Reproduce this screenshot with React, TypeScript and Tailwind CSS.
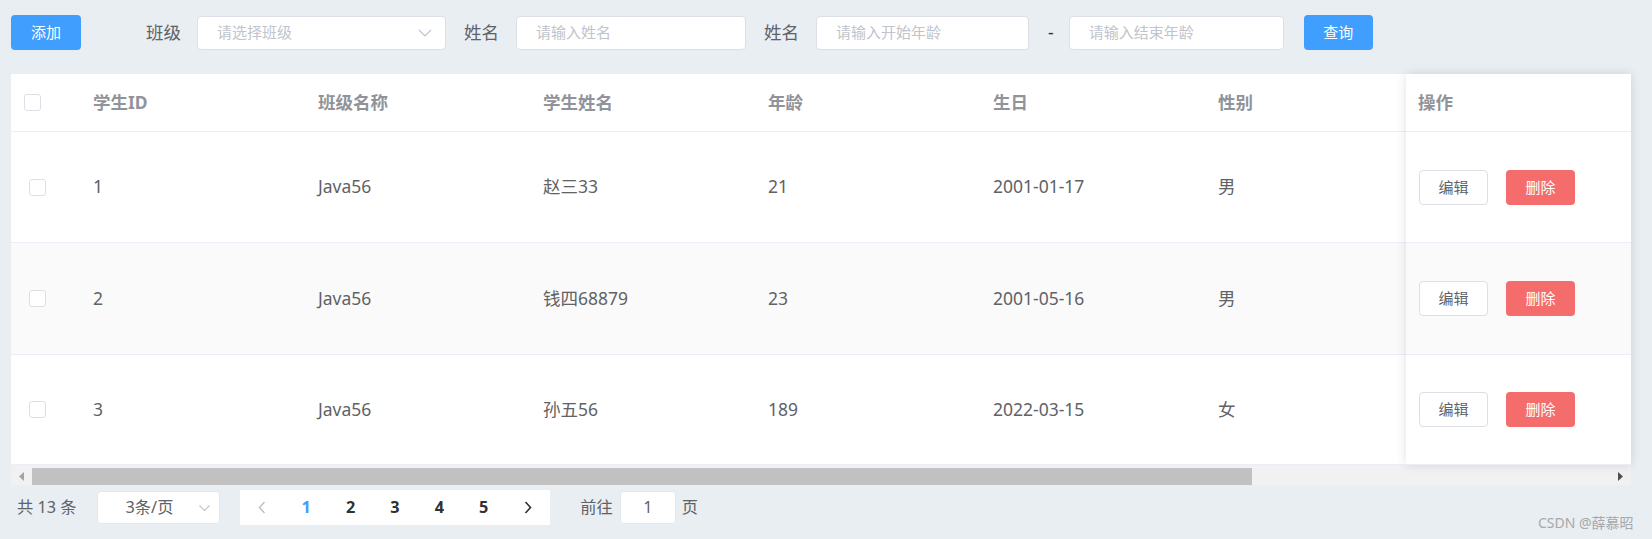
import React from "react";

type Student = { id: number; cls: string; name: string; age: number; birth: string; sex: string };

const students: Student[] = [
  { id: 1, cls: "Java56", name: "赵三33", age: 21, birth: "2001-01-17", sex: "男" },
  { id: 2, cls: "Java56", name: "钱四68879", age: 23, birth: "2001-05-16", sex: "男" },
  { id: 3, cls: "Java56", name: "孙五56", age: 189, birth: "2022-03-15", sex: "女" },
];

const rowHeights = ["h-[111px]", "h-[112px]", "h-[110px]"];

function Chevron({ className }: { className?: string }) {
  return (
    <svg width="14" height="8" viewBox="0 0 14 8" fill="none" stroke="currentColor" strokeWidth="1.2" className={className}>
      <path d="M1 1l6 6 6-6" />
    </svg>
  );
}

function Checkbox() {
  return <span className="block h-[17px] w-[17px] rounded-[3px] border border-[#dcdfe6] bg-white" />;
}

function TextInput({ width, placeholder }: { width: string; placeholder: string }) {
  return (
    <div className={`flex h-[34px] items-center rounded-[4px] border border-[#dcdfe6] bg-white pl-[19px] ${width}`}>
      <span className="text-[15px] text-[#c0c4cc]">{placeholder}</span>
    </div>
  );
}

function Toolbar() {
  return (
    <div className="flex h-[35px] items-center text-[17.5px] text-[#606266]">
      <button className="h-[35px] w-[70px] rounded-[4px] bg-[#409eff] text-[15px] text-white">添加</button>
      <span className="ml-[65px]">班级</span>
      <div className="ml-[16px] flex h-[34px] w-[249px] items-center justify-between rounded-[4px] border border-[#dcdfe6] bg-white pl-[19px] pr-[13px]">
        <span className="text-[15px] text-[#c0c4cc]">请选择班级</span>
        <Chevron className="text-[#c0c4cc]" />
      </div>
      <span className="ml-[18px]">姓名</span>
      <div className="ml-[17px]">
        <TextInput width="w-[230px]" placeholder="请输入姓名" />
      </div>
      <span className="ml-[18px]">姓名</span>
      <div className="ml-[17px]">
        <TextInput width="w-[213px]" placeholder="请输入开始年龄" />
      </div>
      <span className="ml-[19px] text-[#303133]">-</span>
      <div className="ml-[15px]">
        <TextInput width="w-[215px]" placeholder="请输入结束年龄" />
      </div>
      <button className="ml-[20px] h-[35px] w-[69px] rounded-[4px] bg-[#409eff] text-[15px] text-white">查询</button>
    </div>
  );
}

// the last column (操作) is drawn by the fixed right panel
const headers = ["学生ID", "班级名称", "学生姓名", "年龄", "生日", "性别", ""];

function Table() {
  return (
    <div className="mt-[24px] w-[1620px]">
      <div className="flex">
        <div className="w-[1395px] overflow-hidden bg-white">
          <div className="w-[1642px]">
            <div className="flex h-[58px] items-center border-b border-[#ebeef5] text-[17.5px] font-bold text-[#909399]">
              <div className="w-[67px] pl-[13px]">
                <Checkbox />
              </div>
              {headers.map((h, i) => (
                <div key={i} className="w-[225px] pl-[15px]">
                  {h}
                </div>
              ))}
            </div>
            {students.map((s, i) => (
              <div
                key={s.id}
                className={`flex items-center border-b border-[#ebeef5] text-[17.5px] text-[#606266] ${rowHeights[i]} ${i === 1 ? "bg-[#fafafa]" : "bg-white"}`}
              >
                <div className="w-[67px] pl-[18px]">
                  <Checkbox />
                </div>
                <div className="w-[225px] pl-[15px]">{s.id}</div>
                <div className="w-[225px] pl-[15px]">{s.cls}</div>
                <div className="w-[225px] pl-[15px]">{s.name}</div>
                <div className="w-[225px] pl-[15px]">{s.age}</div>
                <div className="w-[225px] pl-[15px]">{s.birth}</div>
                <div className="w-[225px] pl-[15px]">{s.sex}</div>
                <div className="w-[225px] pl-[15px]" />
              </div>
            ))}
          </div>
        </div>
        {/* fixed right column */}
        <div className="relative z-10 w-[225px] bg-white shadow-[0_0_10px_rgba(0,0,0,0.12)]">
          <div className="flex h-[58px] items-center border-b border-[#ebeef5] pl-[12px] text-[17.5px] font-bold text-[#909399]">
            操作
          </div>
          {students.map((s, i) => (
            <div
              key={s.id}
              className={`flex items-center gap-[18px] border-b border-[#ebeef5] pl-[13px] ${rowHeights[i]} ${i === 1 ? "bg-[#fafafa]" : "bg-white"}`}
            >
              <button className="h-[35px] w-[69px] rounded-[4px] border border-[#dcdfe6] bg-white text-[15px] text-[#606266]">
                编辑
              </button>
              <button className="h-[35px] w-[69px] rounded-[4px] bg-[#f56c6c] text-[15px] text-white">删除</button>
            </div>
          ))}
        </div>
      </div>
      {/* horizontal scrollbar */}
      <div className="flex h-[20px] items-end bg-[#f1f1f1]">
        <div className="flex h-[17px] w-[21px] items-center justify-center">
          <svg width="5" height="9" viewBox="0 0 5 9">
            <polygon points="5,0 0,4.5 5,9" fill="#a3a3a3" />
          </svg>
        </div>
        <div className="h-[17px] w-[1220px] bg-[#c1c1c1]" />
        <div className="flex-1" />
        <div className="flex h-[17px] w-[21px] items-center justify-center">
          <svg width="5" height="9" viewBox="0 0 5 9">
            <polygon points="0,0 5,4.5 0,9" fill="#505050" />
          </svg>
        </div>
      </div>
    </div>
  );
}

function Pagination() {
  const pages = [1, 2, 3, 4, 5];
  return (
    <div className="mt-[5px] flex h-[35px] items-center text-[16.25px] text-[#606266]">
      <span className="ml-[6px]">共 13 条</span>
      <div className="ml-[20px] flex h-[33px] w-[123px] items-center justify-between rounded-[4px] border border-[#e4e7ed] bg-white pl-[28px] pr-[9px]">
        <span>3条/页</span>
        <svg width="11" height="6" viewBox="0 0 11 6" fill="none" stroke="#c0c4cc" strokeWidth="1.1">
          <path d="M0.5 0.5l5 5 5-5" />
        </svg>
      </div>
      <div className="ml-[20px] flex h-[35px] bg-white">
        <div className="flex w-[44.4px] items-center justify-center">
          <svg width="8" height="13" viewBox="0 0 8 13" fill="none" stroke="#c0c4cc" strokeWidth="1.6">
            <path d="M6.5 1L1.5 6.5l5 5.5" />
          </svg>
        </div>
        {pages.map((p) => (
          <div
            key={p}
            className={`flex w-[44.4px] items-center justify-center font-bold ${p === 1 ? "text-[#409eff]" : "text-[#303133]"}`}
          >
            {p}
          </div>
        ))}
        <div className="flex w-[44.4px] items-center justify-center">
          <svg width="8" height="13" viewBox="0 0 8 13" fill="none" stroke="#303133" strokeWidth="1.6">
            <path d="M1.5 1l5 5.5-5 5.5" />
          </svg>
        </div>
      </div>
      <span className="ml-[30px]">前往</span>
      <div className="ml-[7px] flex h-[33px] w-[56px] items-center justify-center rounded-[4px] border border-[#e4e7ed] bg-white">
        1
      </div>
      <span className="ml-[6px]">页</span>
    </div>
  );
}

export default function App() {
  return (
    <div className="relative min-h-[539px] w-[1652px] overflow-hidden bg-[#e9eef3] pl-[11px] pt-[15px] font-['Noto_Sans','Noto_Sans_CJK_SC',sans-serif] leading-none">
      <Toolbar />
      <Table />
      <Pagination />
      <span className="absolute left-[1538px] top-[516px] text-[14px] text-[#a8a8a8]">CSDN @薛慕昭</span>
    </div>
  );
}
